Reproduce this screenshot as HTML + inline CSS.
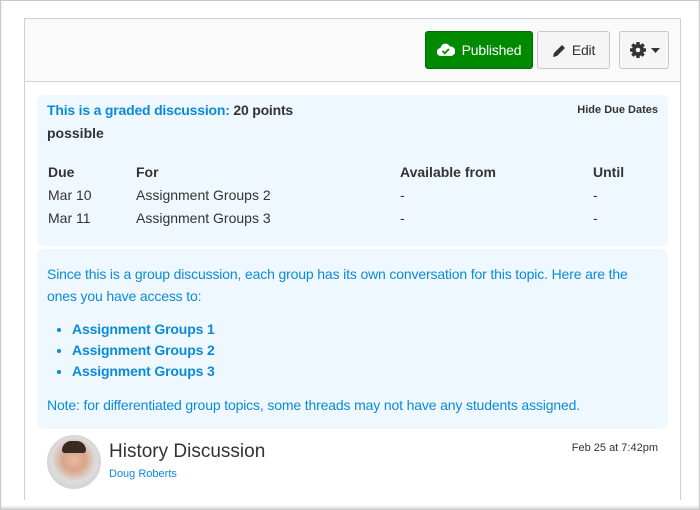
<!DOCTYPE html>
<html><head><meta charset="utf-8"><style>
*{margin:0;padding:0;box-sizing:border-box}
body{width:700px;height:510px;background:#fff;font-family:"Liberation Sans",Arial,sans-serif;position:relative;overflow:hidden;color:#333}
.frame{position:absolute;left:0;top:0;width:700px;height:510px;border:1px solid #c8c8c8;box-shadow:inset 0 -2px 2px rgba(0,0,0,.15);z-index:2}
.panel{position:absolute;left:24px;top:18px;width:657px;height:482px;border-left:1px solid #d0d0d0;border-right:1px solid #d0d0d0;border-top:1px solid #d0d0d0}
.head{height:63px;background:#fafafa;border-bottom:1px solid #d0d0d0;position:relative}
.btn{position:absolute;top:12px;height:38px;border:1px solid #c8c8c8;border-radius:3px;background:#f5f5f5;font-size:14px;color:#333;display:flex;align-items:center;justify-content:center;letter-spacing:-.2px}
.pub{left:400px;width:108px;background:#008a00;border-color:#006b00;color:#fff}
.edit{left:512px;width:73px}
.gear{left:594px;width:50px}
.box{position:absolute;left:12px;width:631px;background:#f0f8ff;border-radius:6px}
.b1{top:76px;height:151px}
.b2{top:230px;height:180px;color:#0a8bd8;font-size:14px;line-height:22px;padding:14px 10px;letter-spacing:-.15px}
.t{position:absolute;font-size:14px}
ul{margin:12px 0 12px 25px}
li{font-weight:bold;line-height:21px}
</style></head><body>
<div class="frame"></div>
<div class="panel">
 <div class="head">
  <div class="btn pub"><svg width="18" height="16" viewBox="0 0 18 16" style="margin-right:7px"><path d="M4 14a4 4 0 0 1-.5-8A5 5 0 0 1 13 4.5a4.5 4.5 0 0 1 1 9.5z" fill="#fff"/><path d="M5.5 9l2.2 2.2L12 7" stroke="#008a00" stroke-width="1.8" fill="none"/></svg>Published</div>
  <div class="btn edit"><svg width="15" height="15" viewBox="0 0 15 15" style="margin-right:5px"><path d="M1 14l1-4 8-8 3 3-8 8z" fill="#333"/></svg>Edit</div>
  <div class="btn gear"><svg width="18" height="18" viewBox="0 0 18 18"><g fill="#333"><circle cx="9" cy="9" r="6"/><rect x="7.3" y="1" width="3.4" height="16"/><rect x="1" y="7.3" width="16" height="3.4"/><rect x="7.3" y="1" width="3.4" height="16" transform="rotate(45 9 9)"/><rect x="7.3" y="1" width="3.4" height="16" transform="rotate(-45 9 9)"/></g><circle cx="9" cy="9" r="2.3" fill="#f5f5f5"/></svg><svg width="9" height="5" viewBox="0 0 9 5" style="margin-left:4px"><path d="M0 0h9L4.5 5z" fill="#333"/></svg></div>
 </div>
 <div class="box b1">
  <div class="t" style="left:10px;top:7px;font-weight:bold;letter-spacing:-.2px"><span style="color:#0a8bd8">This is a graded discussion:</span> 20 points</div>
  <div class="t" style="left:10px;top:30px;font-weight:bold">possible</div>
  <div class="t" style="right:10px;top:9px;font-size:11px;font-weight:bold">Hide Due Dates</div>
  <div class="t" style="left:11px;top:69px;font-weight:bold">Due</div>
  <div class="t" style="left:99px;top:69px;font-weight:bold">For</div>
  <div class="t" style="left:363px;top:69px;font-weight:bold">Available from</div>
  <div class="t" style="left:556px;top:69px;font-weight:bold">Until</div>
  <div class="t" style="left:11px;top:92px">Mar 10</div>
  <div class="t" style="left:99px;top:92px">Assignment Groups 2</div>
  <div class="t" style="left:363px;top:92px">-</div>
  <div class="t" style="left:556px;top:92px">-</div>
  <div class="t" style="left:11px;top:115px">Mar 11</div>
  <div class="t" style="left:99px;top:115px">Assignment Groups 3</div>
  <div class="t" style="left:363px;top:115px">-</div>
  <div class="t" style="left:556px;top:115px">-</div>
 </div>
 <div class="box b2">
  Since this is a group discussion, each group has its own conversation for this topic. Here are the ones you have access to:
  <ul><li>Assignment Groups 1</li><li>Assignment Groups 2</li><li>Assignment Groups 3</li></ul>
  Note: for differentiated group topics, some threads may not have any students assigned.
 </div>
 <div style="position:absolute;left:22px;top:416px;width:54px;height:54px;border-radius:50%;background:radial-gradient(circle at 50% 45%,#e8b9a0 0,#d9a58a 30%,#ddd 60%,#c8c8c8 100%);border:2px solid #d6d6d6"><div style="position:absolute;left:13px;top:4px;width:24px;height:12px;background:#3a2a22;border-radius:10px 10px 3px 3px"></div></div>
 <div class="t" style="left:84px;top:422px;font-size:19px">History Discussion</div>
 <div class="t" style="left:84px;top:449px;font-size:11px;color:#0a8bd8">Doug Roberts</div>
 <div class="t" style="right:22px;top:423px;font-size:11px">Feb 25 at 7:42pm</div>
</div>
</body></html>
